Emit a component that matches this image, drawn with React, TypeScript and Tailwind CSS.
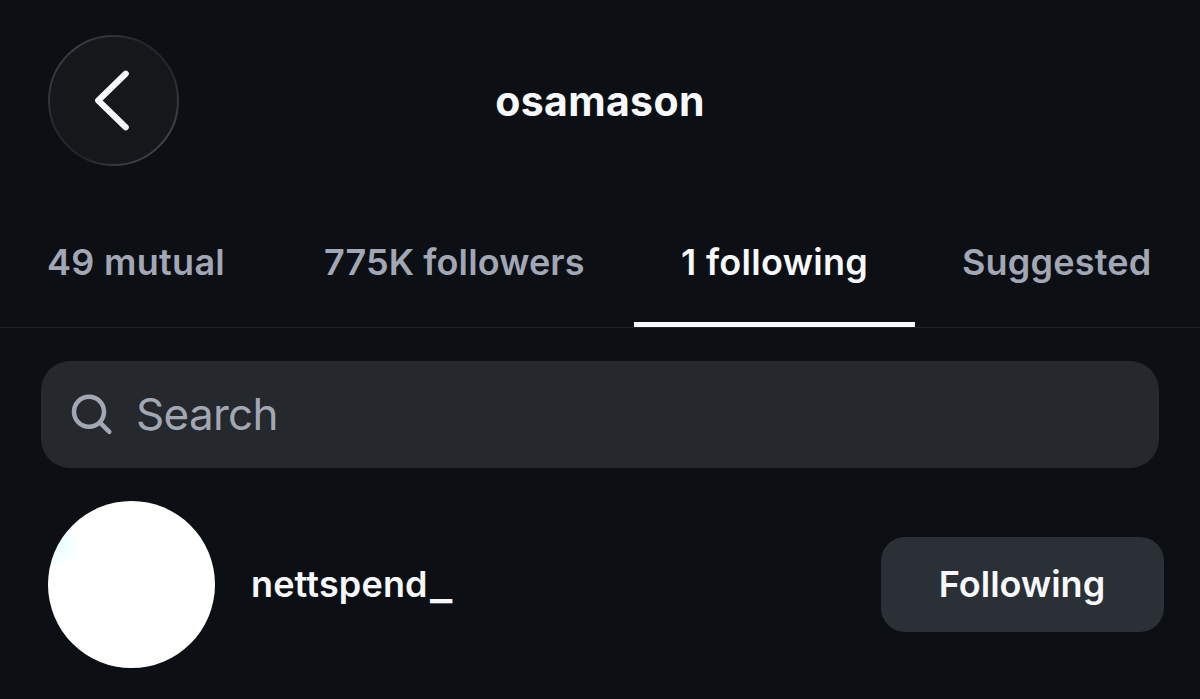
export default function App() {
  return (
    <main className="h-[699px] w-[1200px] overflow-hidden bg-[#0c1014] font-['Inter',sans-serif] text-[#f7f8fa]">
      <header className="grid h-[201px] grid-cols-[179px_1fr_179px] items-center">
        <button aria-label="Back" className="ml-12 size-[131px]">
          <svg className="size-[131px]" viewBox="0 0 131 131" fill="none">
            <defs>
              <linearGradient id="rim" x1="0" y1="0" x2="1" y2="1">
                <stop offset="0.1" stopColor="#3a3e46" />
                <stop offset="0.4" stopColor="#23272c" />
                <stop offset="0.6" stopColor="#23272c" />
                <stop offset="0.9" stopColor="#424650" />
              </linearGradient>
            </defs>
            <circle cx="65.5" cy="65.5" r="64.5" fill="#14181a" stroke="url(#rim)" strokeWidth="2" />
            <path d="M77.7 38.7 50.2 65.5l27.5 26.8" stroke="#f7f8fa" strokeWidth="6.2" strokeLinecap="round" strokeLinejoin="round" />
          </svg>
        </button>
        <h1 className="pt-0.5 text-center text-[41px] leading-none font-bold tracking-[0.35px]">osamason</h1>
      </header>
      <nav className="flex h-[127px] border-b border-[#20242a] text-[36px] font-[580] text-[#a2a7b5]">
        <button className="w-[274px] pb-[5px] pl-[47px] text-left tracking-[0.3px]">49 mutual</button>
        <button className="w-[360px] pb-[5px] pl-[50px] text-left tracking-[0.1px]">775K followers</button>
        <button className="w-[281px] border-b-[5px] border-[#f7f8fa] pl-[47px] text-left tracking-[0.3px] text-[#f7f8fa]">1 following</button>
        <button className="w-[285px] pb-[5px] pl-[47px] text-left tracking-[0.2px]">Suggested</button>
      </nav>
      <div className="mx-[41px] mt-[33px] flex h-[107px] items-center rounded-[29px] bg-[#25282d] pb-px pl-[30px] text-[44px] tracking-[-0.7px] text-[#a2a7b5]">
        <svg className="size-[42px]" viewBox="0 0 42 42" fill="none" stroke="currentColor" strokeWidth="4.5" strokeLinecap="round">
          <circle cx="18" cy="18.7" r="15" />
          <path d="m29.3 29.8 9 9" />
        </svg>
        <span className="ml-[23px]">Search</span>
      </div>
      <div className="mt-[33px] flex h-[167px] items-center pl-12">
        <div className="size-[167px] rounded-full bg-[radial-gradient(circle_at_5%_26%,#e6ffff_0%,#ffffff_12%)]" />
        <span className="ml-9 w-[630px] pb-0.5 text-[36px] font-semibold tracking-[0.15px]">
          nettspend<span className="ml-0.5 inline-block origin-[0%_82%] translate-y-[3px] scale-x-[1.32] scale-y-[1.15]">_</span>
        </span>
        <button className="h-[95px] w-[283px] rounded-[24px] bg-[#2b2f36] pr-px pb-0.5 text-[36px] font-semibold">Following</button>
      </div>
    </main>
  );
}
